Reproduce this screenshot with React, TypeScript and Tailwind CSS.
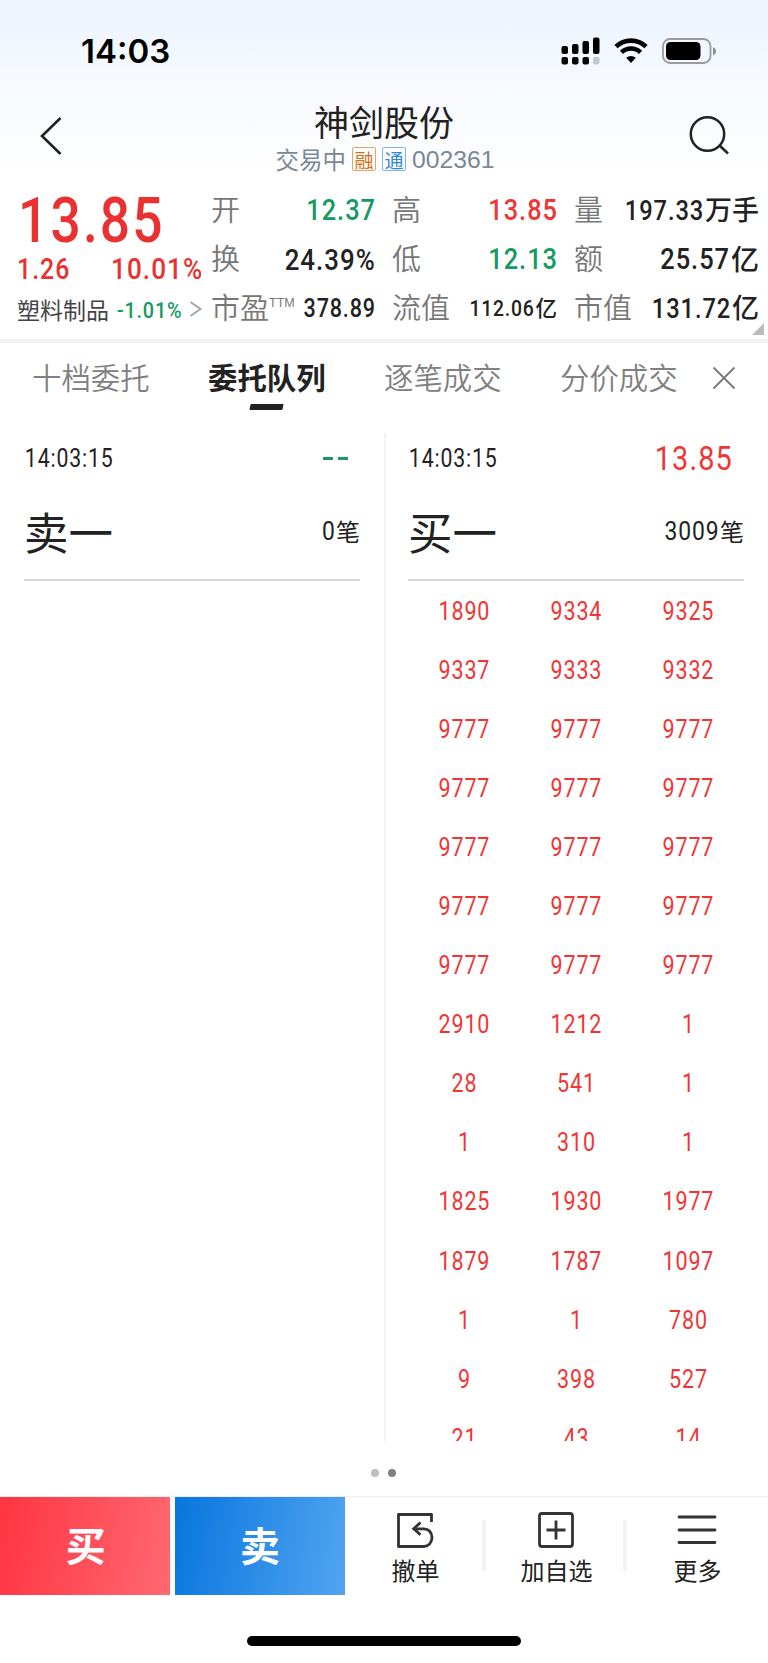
import clsx from "clsx";
import type { ReactNode } from "react";

const queue = [
  [1890, 9334, 9325],
  [9337, 9333, 9332],
  [9777, 9777, 9777],
  [9777, 9777, 9777],
  [9777, 9777, 9777],
  [9777, 9777, 9777],
  [9777, 9777, 9777],
  [2910, 1212, 1],
  [28, 541, 1],
  [1, 310, 1],
  [1825, 1930, 1977],
  [1879, 1787, 1097],
  [1, 1, 780],
  [9, 398, 527],
  [21, 43, 14],
];

const tabs = ["十档委托", "委托队列", "逐笔成交", "分价成交"];

// Condensed figures used for every price and volume
function Num({ className, children }: { className?: string; children: ReactNode }) {
  return (
    <span
      className={clsx(
        "inline-block whitespace-nowrap font-['Roboto',sans-serif] tracking-[0.04em]",
        className
      )}
    >
      <span className="-mr-[0.04em]">{children}</span>
    </span>
  );
}

function StatusBar() {
  return (
    <div className="flex h-[100px] items-center justify-between pl-[81px] pr-[52px]">
      <span className="mt-[3px] font-['Inter',sans-serif] text-[33px] font-semibold leading-none text-black">
        14:03
      </span>
      <svg width="156" height="30" viewBox="0 0 156 30" className="mt-[2px]">
        <rect x="1.5" y="10" width="6.5" height="8" rx="2" />
        <rect x="12" y="8" width="6.5" height="10" rx="2" />
        <rect x="22.5" y="5" width="6.5" height="13" rx="2" />
        <rect x="33" y="1.5" width="6.5" height="16.5" rx="2" />
        <rect x="1.5" y="21" width="6.5" height="7.5" rx="2" />
        <rect x="12" y="21" width="6.5" height="7.5" rx="2" />
        <rect x="22.5" y="21" width="6.5" height="7.5" rx="2" />
        <rect x="33" y="21" width="6.5" height="7.5" rx="2" fill="#c4c7cc" />
        <g fill="none" stroke="#000" strokeWidth="4.6">
          <path d="M56 10.7a21.5 21.5 0 0 1 30 0" />
          <path d="M61.5 16.3a13.6 13.6 0 0 1 19 0" />
        </g>
        <path d="M66.2 21.8a7.5 7.5 0 0 1 9.6 0L71 27Z" />
        <rect x="103" y="3" width="47.5" height="24" rx="7" fill="none" stroke="#999b9e" strokeWidth="1.8" />
        <rect x="106" y="6" width="34.5" height="18" rx="4.5" />
        <path d="M153 11.3q3 1.2 3 4t-3 4Z" fill="#8b8d90" />
      </svg>
    </div>
  );
}

function Header() {
  return (
    <div className="flex h-[80px] items-start justify-between pl-[38px] pr-[37px]">
      <svg width="28" height="44" viewBox="0 0 28 44" className="mt-[14px]" fill="none" stroke="#222" strokeWidth="2.6">
        <path d="M22.5 4 4 22l18.5 18" />
      </svg>
      <div className="flex flex-col items-center pl-[17px]">
        <h1 className="-ml-[2px] -mt-[1px] text-[35px] leading-[44px] text-[#222]">神剑股份</h1>
        <div className="mt-[1px] flex h-[30px] items-center text-[23.5px] text-[#7a8896]">
          <span className="leading-[30px]">交易中</span>
          <span className="ml-[6px] flex size-[24px] items-center justify-center rounded-[2px] border border-[#e5a56a] text-[19px] leading-none text-[#cf7215]">
            融
          </span>
          <span className="ml-[6px] flex size-[24px] items-center justify-center rounded-[2px] border border-[#7fb5e8] text-[19px] leading-none text-[#2f86d6]">
            通
          </span>
          <span className="ml-[6px] mt-[2px] font-['Liberation_Sans',sans-serif] text-[24.7px]">002361</span>
        </div>
      </div>
      <svg width="44" height="44" viewBox="0 0 44 44" className="mt-[14px]" fill="none" stroke="#222" strokeWidth="2.5">
        <circle cx="20.5" cy="20" r="16.7" />
        <path d="m32 31 9 8.5" />
      </svg>
    </div>
  );
}

function Stat({
  label,
  sup,
  value,
  unit,
  className,
}: {
  label: string;
  sup?: string;
  value: string;
  unit?: ReactNode;
  className?: string;
}) {
  return (
    <div className="flex h-[49px] items-center justify-between">
      <span className="-ml-[1px] flex w-0 whitespace-nowrap text-[29px] font-[350] leading-[49px] text-[#777]">
        {label}
        {sup && (
          <sup className="top-0 mt-[15px] font-['Liberation_Sans',sans-serif] text-[12.5px] leading-none">{sup}</sup>
        )}
      </span>
      <span className={clsx("mt-[4px] flex items-center font-medium", className)}>
        <Num className="origin-right scale-x-[0.86]">{value}</Num>
        {unit}
      </span>
    </div>
  );
}

function Unit({ className, children }: { className: string; children: ReactNode }) {
  return <span className={clsx("-mt-[3px] ml-[2px] leading-[40px]", className)}>{children}</span>;
}

function Quote() {
  return (
    <div className="relative flex h-[159px] pt-[4px]">
      <div className="w-[212px] pl-[17px]">
        <div className="flex h-[69px] pt-[5px]">
          <Num className="ml-[1px] origin-left scale-x-[0.84] text-[63.5px] font-medium leading-[63px] text-[#ea3131]">
            13.85
          </Num>
        </div>
        <div className="flex h-[33px] w-[185px] items-center justify-between text-[29px] leading-[33px] text-[#ea3131]">
          <Num className="origin-left scale-x-[0.86] font-medium">1.26</Num>
          <Num className="origin-right scale-x-[0.9] font-medium">10.01%</Num>
        </div>
        <div className="mt-[2px] flex h-[42px] items-center text-[23px] text-[#444]">
          <span className="w-[100px] whitespace-nowrap">塑料制品</span>
          <Num className="mt-[4px] w-[72px] origin-left scale-x-[0.88] text-[22.5px] font-medium text-[#149a62]">
            -1.01%
          </Num>
          <svg width="14" height="18" viewBox="0 0 14 18" fill="none" stroke="#9aa3ad" strokeWidth="1.8">
            <path d="m1.5 2 10 7-10 7" />
          </svg>
        </div>
      </div>
      <div className="w-[163px]">
        <Stat label="开" value="12.37" className="text-[29.5px] text-[#149a62]" />
        <Stat label="换" value="24.39%" className="text-[30px] text-[#222]" />
        <Stat label="市盈" sup="TTM" value="378.89" className="text-[25px] text-[#222]" />
      </div>
      <div className="ml-[18px] w-[164px]">
        <Stat label="高" value="13.85" className="text-[29.5px] text-[#f03535]" />
        <Stat label="低" value="12.13" className="text-[29.5px] text-[#149a62]" />
        <Stat
          label="流值"
          value="112.06"
          unit={<Unit className="text-[21.5px]">亿</Unit>}
          className="text-[22.5px] text-[#222]"
        />
      </div>
      <div className="ml-[18px] w-[184px]">
        <Stat
          label="量"
          value="197.33"
          unit={<Unit className="text-[27px]">万手</Unit>}
          className="text-[27.5px] text-[#222]"
        />
        <Stat
          label="额"
          value="25.57"
          unit={<Unit className="text-[28px]">亿</Unit>}
          className="text-[29.5px] text-[#222]"
        />
        <Stat
          label="市值"
          value="131.72"
          unit={<Unit className="text-[27px]">亿</Unit>}
          className="text-[27.5px] text-[#222]"
        />
      </div>
      <svg width="12" height="12" className="absolute bottom-[4px] right-[4px]">
        <path d="M12 0v12H0Z" fill="#bbb" />
      </svg>
    </div>
  );
}

function Tabs() {
  return (
    <div className="flex h-[90px] items-start pl-[32px] pt-[11px]">
      {tabs.map((tab, i) => (
        <div key={tab} className="flex w-[176px] flex-col items-start">
          <span
            className={clsx(
              "whitespace-nowrap text-[29.4px] leading-[44px]",
              i === 1 ? "font-bold text-[#222]" : "font-[350] text-[#808080]"
            )}
          >
            {tab}
          </span>
          {i === 1 && <span className="ml-[42px] mt-[6px] h-[6px] w-[33px] -skew-x-12 rounded-[1px] bg-[#222]" />}
        </div>
      ))}
      <svg width="24" height="24" viewBox="0 0 24 24" className="-ml-[24px] mt-[12px]" fill="none" stroke="#777" strokeWidth="1.8">
        <path d="m1.5 1.5 21 21m0-21-21 21" />
      </svg>
    </div>
  );
}

function PanelHead({ side, count, price }: { side: string; count: string; price: ReactNode }) {
  return (
    <div className="mx-[24px] h-[148px] border-b-2 border-[#d5d5d5] text-[#222]">
      <div className="flex h-[51px] items-center justify-between pr-[12px]">
        <Num className="origin-left scale-x-[0.85] pl-[1px] text-[25px]">14:03:15</Num>
        {price}
      </div>
      <div className="mt-[16px] flex h-[62px] items-center justify-between">
        <span className="text-[44.5px] leading-[62px]">{side}</span>
        <span className="flex items-center text-[24px]">
          <Num className="origin-right scale-x-[0.88] pr-[1px] text-[26px]">{count}</Num>笔
        </span>
      </div>
    </div>
  );
}

function Action({ label, children }: { label: string; children: ReactNode }) {
  return (
    <div className="flex w-[141px] flex-col items-center">
      <svg width="40" height="40" viewBox="0 0 40 40" className="-ml-[1px] mt-[13px]" fill="none" stroke="#333" strokeWidth="2.8">
        {children}
      </svg>
      <span className="mt-[2px] text-[24px] leading-[36px] text-[#222]">{label}</span>
    </div>
  );
}

export default function App() {
  return (
    <div className="h-[1663px] w-[768px] overflow-hidden bg-white font-['Noto_Sans_CJK_SC',sans-serif]">
      <div className="bg-linear-to-b from-[#ecf4fe] via-[#f8faff] to-white">
        <StatusBar />
        <Header />
      </div>
      <Quote />
      <div className="h-[4px] bg-[#f3f3f3]" />
      <Tabs />

      <div className="flex h-[1008px] overflow-hidden">
        <div className="w-[384px]">
          <PanelHead
            side="卖一"
            count="0"
            price={
              <span className="flex gap-[5px]">
                <i className="h-[3px] w-[10px] bg-[#149a62]" />
                <i className="h-[3px] w-[10px] bg-[#149a62]" />
              </span>
            }
          />
        </div>
        <div className="w-[384px] shadow-[inset_2px_0_0_#f3f3f3]">
          <PanelHead
            side="买一"
            count="3009"
            price={<Num className="origin-right scale-x-[0.85] text-[34px] text-[#f03535]">13.85</Num>}
          />
          <div className="mx-[24px] mt-[1px] grid grid-cols-3">
            {queue.flat().map((n, i) => (
              <Num key={i} className="h-[59.05px] scale-x-[0.86] text-center text-[25px] leading-[59px] text-[#f03535]">
                {n}
              </Num>
            ))}
          </div>
        </div>
      </div>

      <div className="flex h-[56px] justify-center gap-[9px] border-b border-[#eee] pr-[1px] pt-[28px]">
        <span className="size-[8px] rounded-full bg-[#bfbfbf]" />
        <span className="size-[8px] rounded-full bg-[#808080]" />
      </div>

      <div className="flex h-[98px]">
        <button className="w-[169.5px] bg-linear-[100deg] from-[#ff3541] to-[#ff6872] pb-[5px] pl-[2px] text-[40px] font-bold text-white">
          买
        </button>
        <button className="ml-[5.5px] w-[170px] bg-linear-[100deg] from-[#0776de] to-[#52a4f1] pb-[5px] text-[40px] font-bold text-white">
          卖
        </button>
        <Action label="撤单">
          <path d="M36.5 12V4.500H3.500v32H29c4.500 0 8-4 8-9s-3.500-8.700-8-8.700H18.500" strokeLinejoin="round" />
          <path d="m25.5 12.500-6.800 6.300 6.800 6" />
        </Action>
        <span className="-ml-[4px] mt-[23px] h-[51px] w-[4px] bg-[#f3f3f3]" />
        <Action label="加自选">
          <rect x="3.5" y="3.5" width="33" height="33" rx="2.5" />
          <path d="M10.5 20h19M20 10.500v19" />
        </Action>
        <span className="-ml-[4px] mt-[23px] h-[51px] w-[4px] bg-[#f3f3f3]" />
        <Action label="更多">
          <path d="M2 7h36M2 20h36M2 32.500h36" strokeLinecap="round" />
        </Action>
      </div>
      <div className="mx-auto mt-[41px] h-[10px] w-[274px] rounded-full bg-black" />
    </div>
  );
}
